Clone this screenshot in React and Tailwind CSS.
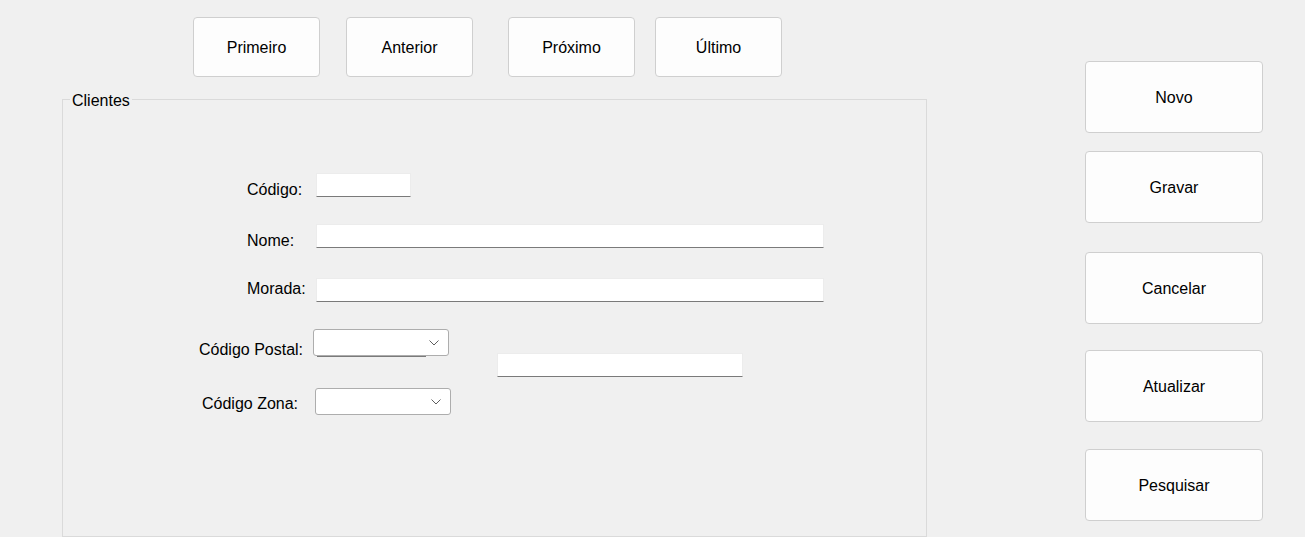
import React from 'react';

const NAV = [
    { label: 'Primeiro', ml: 'ml-[193px]' },
    { label: 'Anterior', ml: 'ml-[26px]' },
    { label: 'Próximo', ml: 'ml-[35px]' },
    { label: 'Último', ml: 'ml-[20px]' },
];

const ACTIONS = [
    { label: 'Novo', mt: 'mt-[61px]' },
    { label: 'Gravar', mt: 'mt-[18px]' },
    { label: 'Cancelar', mt: 'mt-[29px]' },
    { label: 'Atualizar', mt: 'mt-[26px]' },
    { label: 'Pesquisar', mt: 'mt-[27px]' },
];

function TextBox({ className }) {
    return <div className={`h-[24px] shrink-0 bg-white border border-[#ececec] border-b-[#7a7a7a] ${className}`} />;
}

function Chevron() {
    return (
        <svg width="10" height="6" viewBox="0 0 10 6" className="block">
            <polyline points="0.5,0.5 5,5 9.5,0.5" fill="none" stroke="#5f5f5f" strokeWidth="1" />
        </svg>
    );
}

function ComboBox({ underline }) {
    return (
        <div className="relative w-[136px] h-[27px] shrink-0">
            <div className="w-full h-full bg-white border border-[#adadad] rounded-[3px] flex items-center justify-end pr-[9px]">
                <Chevron />
            </div>
            {underline && <div className="absolute left-[4px] top-[27px] w-[109px] h-[1px] bg-[#7a7a7a]" />}
        </div>
    );
}

function Label({ children, className }) {
    return <span className={`leading-[24px] text-[16px] text-black shrink-0 ${className}`}>{children}</span>;
}

export default function App() {
    return (
        <div className="w-[1305px] h-[537px] overflow-hidden bg-[#f0f0f0] flex font-['Liberation_Sans',Arial,sans-serif]">
            <div className="w-[1085px] shrink-0 flex flex-col">
                <div className="flex pt-[17px]">
                    {NAV.map(b => (
                        <button key={b.label} className={`${b.ml} w-[127px] h-[60px] pt-[2px] bg-[#fdfdfd] border border-[#cfcfcf] rounded-[4px] text-[16px] text-black flex items-center justify-center`}>
                            {b.label}
                        </button>
                    ))}
                </div>
                <fieldset className="ml-[62px] mt-[11px] w-[865px] h-[450px] border border-[#dadada] p-0 m-0">
                    <legend className="ml-[7px] px-[2px] pt-[4px] text-[16px] leading-[18px] text-black">Clientes</legend>
                    {/* Código */}
                    <div className="flex items-start h-[24px] mt-[63px]">
                        <Label className="ml-[184px] w-[69px] mt-[5px]">Código:</Label>
                        <TextBox className="w-[95px]" />
                    </div>
                    {/* Nome */}
                    <div className="flex items-start h-[24px] mt-[27px]">
                        <Label className="ml-[184px] w-[69px] mt-[5px]">Nome:</Label>
                        <TextBox className="w-[508px]" />
                    </div>
                    {/* Morada */}
                    <div className="flex items-start h-[24px] mt-[30px]">
                        <Label className="ml-[184px] w-[69px] -mt-[1px]">Morada:</Label>
                        <TextBox className="w-[508px]" />
                    </div>
                    {/* Código Postal */}
                    <div className="flex items-start h-[48px] mt-[27px]">
                        <Label className="ml-[136px] w-[114px] mt-[9px]">Código Postal:</Label>
                        <ComboBox underline />
                        <TextBox className="ml-[48px] mt-[24px] w-[246px]" />
                    </div>
                    {/* Código Zona */}
                    <div className="flex items-start h-[27px] mt-[11px]">
                        <Label className="ml-[139px] w-[113px] mt-[4px]">Código Zona:</Label>
                        <ComboBox />
                    </div>
                </fieldset>
            </div>
            <div className="w-[178px] shrink-0 flex flex-col">
                {ACTIONS.map(b => (
                    <button key={b.label} className={`${b.mt} w-[178px] h-[72px] pt-[2px] shrink-0 bg-[#fdfdfd] border border-[#cfcfcf] rounded-[4px] text-[16px] text-black flex items-center justify-center`}>
                        {b.label}
                    </button>
                ))}
            </div>
        </div>
    );
}
